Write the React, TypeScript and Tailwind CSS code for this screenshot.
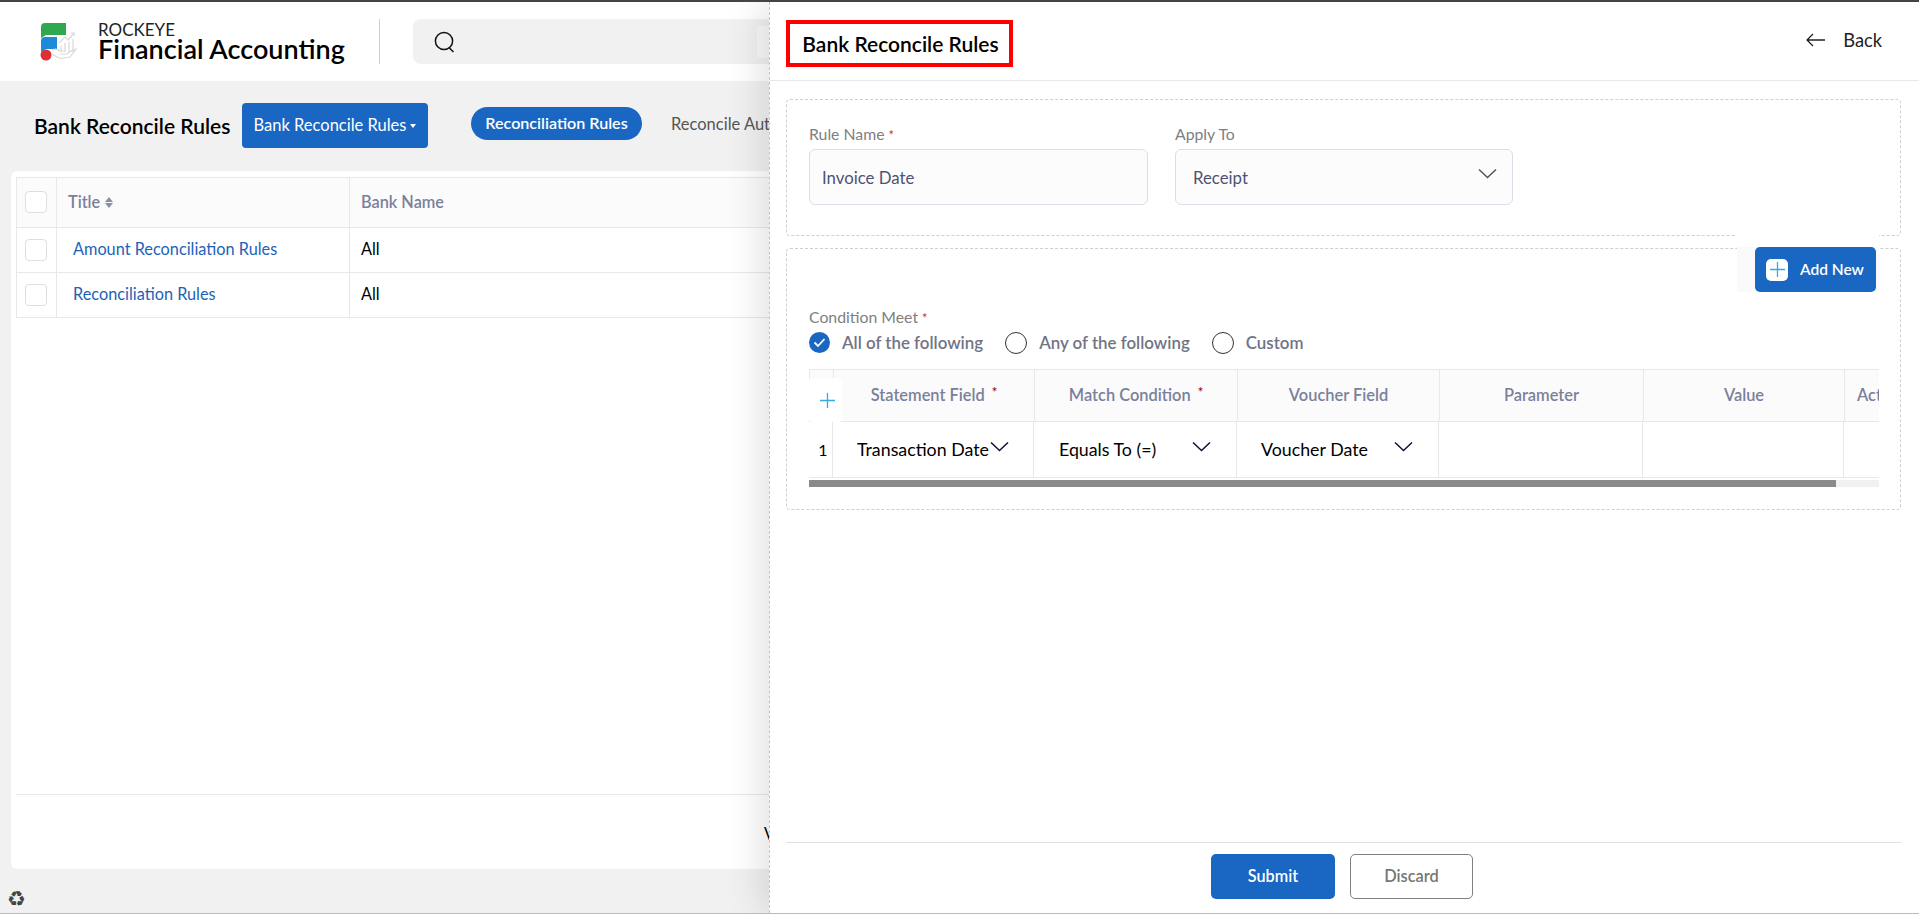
import React from "react";

const font = { fontFamily: '"Lato", "Noto Sans", sans-serif' };

function Chevron({ color = "#0b1430", className = "" }: { color?: string; className?: string }) {
  return (
    <svg width="19" height="11" viewBox="0 0 19 11" fill="none" className={className}>
      <path d="M1 1.5 L9.5 9.5 L18 1.5" stroke={color} strokeWidth="1.5" />
    </svg>
  );
}

function Logo() {
  return (
    <svg width="37" height="39" viewBox="0 0 37 39" fill="none">
      <path d="M5 1 H26 V13 H6 L1 16 V5 Q1 1 5 1Z" fill="#2fa84f" />
      <path d="M5 15 H17 V27 H6 L1 30 V19 Q1 15 5 15Z" fill="#1c8ad8" />
      <circle cx="6" cy="33" r="5.5" fill="#dd3030" />
      <g stroke="#d9d9d9" strokeWidth="1.2" fill="none">
        <path d="M19 21 L25 15 L28 18 L34 11" />
        <path d="M31 11 H34 V14" />
        <path d="M21 24 V30 M25 21 V30 M29 20 V30 M33 17 V30" />
        <path d="M12 32 L17 35 Q20 37 24 36 L30 35 L36 27 L31 29 L27 32 H20" />
        <path d="M12 28 Q16 26 20 29 H26" />
      </g>
    </svg>
  );
}

function Plus({ color = "#36a9e1", size = 16 }: { color?: string; size?: number }) {
  return (
    <svg width={size} height={size} viewBox="0 0 16 16" fill="none">
      <path d="M8 0 V16 M0 8 H16" stroke={color} strokeWidth="1.4" />
    </svg>
  );
}

function Cb() {
  return <div className="w-[22px] h-[22px] rounded-[4px] border border-[#dedede] bg-white" />;
}

function Radio({ label }: { label: string }) {
  return (
    <div className="flex items-center gap-[12px]">
      <div className="w-[22px] h-[22px] rounded-full border border-[#333] bg-white" />
      <span className="text-[16.9px] font-semibold text-[#6f7484]">{label}</span>
    </div>
  );
}

function HeadCell({ label, req, w }: { label: string; req?: boolean; w: string }) {
  return (
    <div className={`${w} shrink-0 h-full flex items-center justify-center gap-[7px] border-r border-[#e8e8e8] text-[16.4px] font-semibold text-[#7a809b]`}>
      <span>{label}</span>
      {req && <span className="text-[#a01030] text-[13px] leading-none -mt-[6px]">*</span>}
    </div>
  );
}

function RowCell({ text, w, pad }: { text?: string; w: string; pad?: string }) {
  return (
    <div className={`${w} shrink-0 h-full flex items-center border-r border-[#e8e8e8] text-[17.8px] text-black ${pad ?? ""}`}>
      {text && <span className="w-[133px] whitespace-nowrap">{text}</span>}
      {text && <Chevron className="-mt-[6px]" />}
    </div>
  );
}

export default function App() {
  return (
    <div style={font} className="relative w-screen h-screen overflow-hidden flex flex-col bg-[#f1f1f1] border-t-2 border-b border-t-[#444] border-b-[#bbb]">
      <header className="h-[79px] shrink-0 bg-white flex items-center pl-[40px]">
        <Logo />
        <div className="ml-[21px] w-[281px] flex flex-col pb-[2px]">
          <span className="h-[17px] text-[17px] leading-[17px] text-[#222]">ROCKEYE</span>
          <span className="h-[22px] text-[27px] leading-[22px] font-semibold text-black whitespace-nowrap">Financial Accounting</span>
        </div>
        <div className="w-px h-[45px] bg-[#cfcfcf]" />
        <div className="ml-[33px] w-[700px] h-[45px] rounded-[8px] bg-[#f1f1f1] flex items-center pl-[21px]">
          <svg width="21" height="22" viewBox="0 0 21 22" fill="none">
            <circle cx="10" cy="10" r="8.6" stroke="#111" strokeWidth="1.5" />
            <path d="M15 16.5 L19.5 21" stroke="#111" strokeWidth="1.5" />
          </svg>
          <div className="ml-[302px] w-[40px] h-[32px] bg-[#f8f8f8] rounded-[4px]" />
        </div>
      </header>

      <main className="flex-1 flex flex-col min-h-0">
        <div className="flex items-start pl-[34px] pt-[22px] shrink-0">
          <h1 className="text-[21px] leading-[28px] font-semibold text-black mt-[9px] whitespace-nowrap w-[208px]">Bank Reconcile Rules</h1>
          <button className="w-[186px] h-[45px] rounded-[4px] bg-[#1967c2] text-white text-[16.5px] flex items-center justify-center gap-[4px] whitespace-nowrap">
            Bank Reconcile Rules
            <span className="w-0 h-0 border-x-[3.5px] border-x-transparent border-t-[4px] border-t-white" />
          </button>
          <div className="ml-[43px] mt-[4px] w-[171px] h-[33px] rounded-full bg-[#1967c2] text-white text-[16.1px] font-semibold flex items-center justify-center whitespace-nowrap">
            Reconciliation Rules
          </div>
          <span className="ml-[29px] mt-[9px] text-[16.5px] leading-[24px] text-[#555] whitespace-nowrap">Reconcile Auto</span>
        </div>

        <section className="mt-[23px] mx-[11px] h-[698px] bg-white rounded-[6px] pt-[6px] pl-[5px] flex flex-col shrink-0 relative">
          <div className="flex h-[51px] border border-[#e8e8e8] bg-[#fbfbfb] text-[16.3px] font-semibold text-[#7a809b]">
            <div className="w-[40px] shrink-0 flex items-center pl-[8px] pb-[2px] border-r border-[#e8e8e8]"><Cb /></div>
            <div className="w-[293px] shrink-0 flex items-center pl-[11px] pb-[1px] gap-[5px] border-r border-[#e8e8e8]">
              Title
              <span className="flex flex-col gap-[1px]">
                <span className="w-0 h-0 border-x-[4px] border-x-transparent border-b-[5px] border-b-[#8b8fa3]" />
                <span className="w-0 h-0 border-x-[4px] border-x-transparent border-t-[5px] border-t-[#8b8fa3]" />
              </span>
            </div>
            <div className="flex-1 flex items-center pl-[11px] pb-[1px]">Bank Name</div>
          </div>
          {["Amount Reconciliation Rules", "Reconciliation Rules"].map((t) => (
            <div key={t} className="flex h-[45px] border border-t-0 border-[#e8e8e8] text-[16.3px]">
              <div className="w-[40px] shrink-0 flex items-center pl-[8px] pb-[1px] border-r border-[#e8e8e8]"><Cb /></div>
              <div className="w-[293px] shrink-0 flex items-center pl-[16px] pb-[1px] text-[#1d62b8] border-r border-[#e8e8e8]">{t}</div>
              <div className="flex-1 flex items-center pl-[11px] pb-[1px] text-black">All</div>
            </div>
          ))}
          <div className="mt-auto h-[75px] border-t border-[#e8e8e8] pl-[748px] pt-[28px] text-[16.3px] leading-[22px] text-black">View</div>
        </section>

        <div className="pl-[7px] pt-[19px] text-[21px] leading-[22px] text-[#444]" style={{ fontFamily: '"DejaVu Sans", sans-serif' }}>♻</div>
      </main>

      {/* sliding panel over the page */}
      <aside className="absolute left-[769px] top-0 right-0 bottom-0 bg-white border-l border-dashed border-l-[#c4c4c4] shadow-[-8px_0_35px_rgba(0,0,0,0.12)] flex flex-col">
        <div className="h-[79px] shrink-0 border-b border-[#e8e8e8] flex items-center pl-[16px] pr-[37px] pt-[5px] justify-between">
          <div className="w-[227px] h-[47px] border-[4px] border-[#f00] flex items-center justify-center pl-[2px] text-[21px] font-semibold text-black whitespace-nowrap">
            Bank Reconcile Rules
          </div>
          <div className="flex items-center gap-[17px] text-[18.3px] leading-[24px] text-[#222] -mt-[7px]">
            <svg width="20" height="14" viewBox="0 0 20 14" fill="none">
              <path d="M7 1 L1 7 L7 13 M1 7 H19" stroke="#222" strokeWidth="1.3" />
            </svg>
            Back
          </div>
        </div>

        <div className="ml-[16px] mr-[18px] mt-[18px] h-[137px] shrink-0 border border-dashed border-[#cfcfcf] rounded-[4px] pt-[24px] pl-[22px] flex gap-[27px]">
          <div className="w-[339px]">
            <div className="h-[20px] text-[15.8px] leading-[20px] text-[#808080]">Rule Name <span className="text-[#d03030] text-[13px]">*</span></div>
            <div className="mt-[5px] h-[56px] rounded-[6px] border border-[#dcdcea] bg-[#fcfcfd] flex items-center pl-[12px] pt-[2px] text-[16.8px] text-[#4d5373]">Invoice Date</div>
          </div>
          <div className="w-[338px]">
            <div className="h-[20px] text-[15.8px] leading-[20px] text-[#808080]">Apply To</div>
            <div className="mt-[5px] h-[56px] rounded-[6px] border border-[#dcdcea] bg-[#fcfcfd] flex items-center pl-[17px] pr-[15px] pt-[2px] justify-between text-[16.8px] text-[#4d5373]">
              Receipt
              <Chevron color="#555" className="-mt-[9px]" />
            </div>
          </div>
        </div>

        <div className="relative ml-[16px] mr-[18px] mt-[12px] h-[262px] shrink-0 border border-dashed border-[#cfcfcf] rounded-[4px] pt-[58px] pl-[22px]">
          <div className="h-[20px] text-[15.8px] leading-[20px] text-[#808080]">Condition Meet <span className="text-[#d03030] text-[13px]">*</span></div>
          <div className="mt-[3px] h-[25px] flex items-center gap-[22px]">
            <div className="flex items-center gap-[12px]">
              <div className="w-[21px] h-[21px] rounded-full bg-[#1967c2] flex items-center justify-center">
                <svg width="13" height="11" viewBox="0 0 13 11" fill="none">
                  <path d="M1.5 5.5 L5 9 L11.5 2" stroke="#fff" strokeWidth="1.8" />
                </svg>
              </div>
              <span className="text-[16.9px] font-semibold text-[#6f7484]">All of the following</span>
            </div>
            <Radio label="Any of the following" />
            <Radio label="Custom" />
          </div>

          <div className="relative mt-[14px] w-[1070px] overflow-hidden">
            <div className="flex h-[53px] border-y border-[#e8e8e8] bg-[#fbfbfb] w-[1120px] border-l">
              <div className="w-[24px] shrink-0 border-r border-[#e8e8e8]" />
              <HeadCell label="Statement Field" req w="w-[201px]" />
              <HeadCell label="Match Condition" req w="w-[203px]" />
              <HeadCell label="Voucher Field" w="w-[202px]" />
              <HeadCell label="Parameter" w="w-[204px]" />
              <HeadCell label="Value" w="w-[201px]" />
              <div className="flex-1 pl-[12px] flex items-center text-[16.4px] font-semibold text-[#7a809b]">Action</div>
            </div>
            <div className="flex h-[56px] border-b border-[#e8e8e8] w-[1120px]">
              <div className="w-[24px] shrink-0 h-full border-r border-[#e8e8e8] flex items-center justify-center pl-[5px] text-[16px] text-black">1</div>
              <RowCell text="Transaction Date" w="w-[201px]" pad="pl-[24px]" />
              <RowCell text="Equals To (=)" w="w-[203px]" pad="pl-[25px]" />
              <RowCell text="Voucher Date" w="w-[202px]" pad="pl-[24px]" />
              <RowCell w="w-[204px]" />
              <RowCell w="w-[201px]" />
            </div>
            <div className="mt-[2px] h-[7px] bg-[#f1f1f1]">
              <div className="h-full w-[1027px] bg-[#8a8a8a]" />
            </div>
            <div className="absolute left-0 top-[9px] w-[33px] h-[44px] bg-white rounded-[3px] flex items-center justify-center pl-[3px]">
              <Plus size={15} />
            </div>
          </div>

          <div className="absolute -top-[14px] right-[21px] w-[142px] pt-[12px] bg-white">
            <div className="h-[45px] bg-[#fafafa] flex justify-end pr-[3px]">
              <button className="w-[121px] h-[45px] rounded-[5px] bg-[#1967c2] text-white text-[15.5px] font-semibold flex items-center pl-[11px] gap-[12px] whitespace-nowrap">
                <span className="w-[22px] h-[22px] rounded-[5px] bg-white flex items-center justify-center"><Plus size={15} /></span>
                Add New
              </button>
            </div>
          </div>
        </div>

        <div className="mt-auto ml-[16px] mr-[18px] h-[71px] shrink-0 border-t border-[#e0e0e0] flex items-center justify-center gap-[15px] pb-[3px] pr-[3px]">
          <button className="w-[124px] h-[45px] rounded-[5px] bg-[#1967c2] text-white text-[16.2px] font-semibold">Submit</button>
          <button className="w-[123px] h-[45px] rounded-[5px] border border-[#808080] bg-white text-[#777] text-[16.4px] font-semibold">Discard</button>
        </div>
      </aside>
    </div>
  );
}
